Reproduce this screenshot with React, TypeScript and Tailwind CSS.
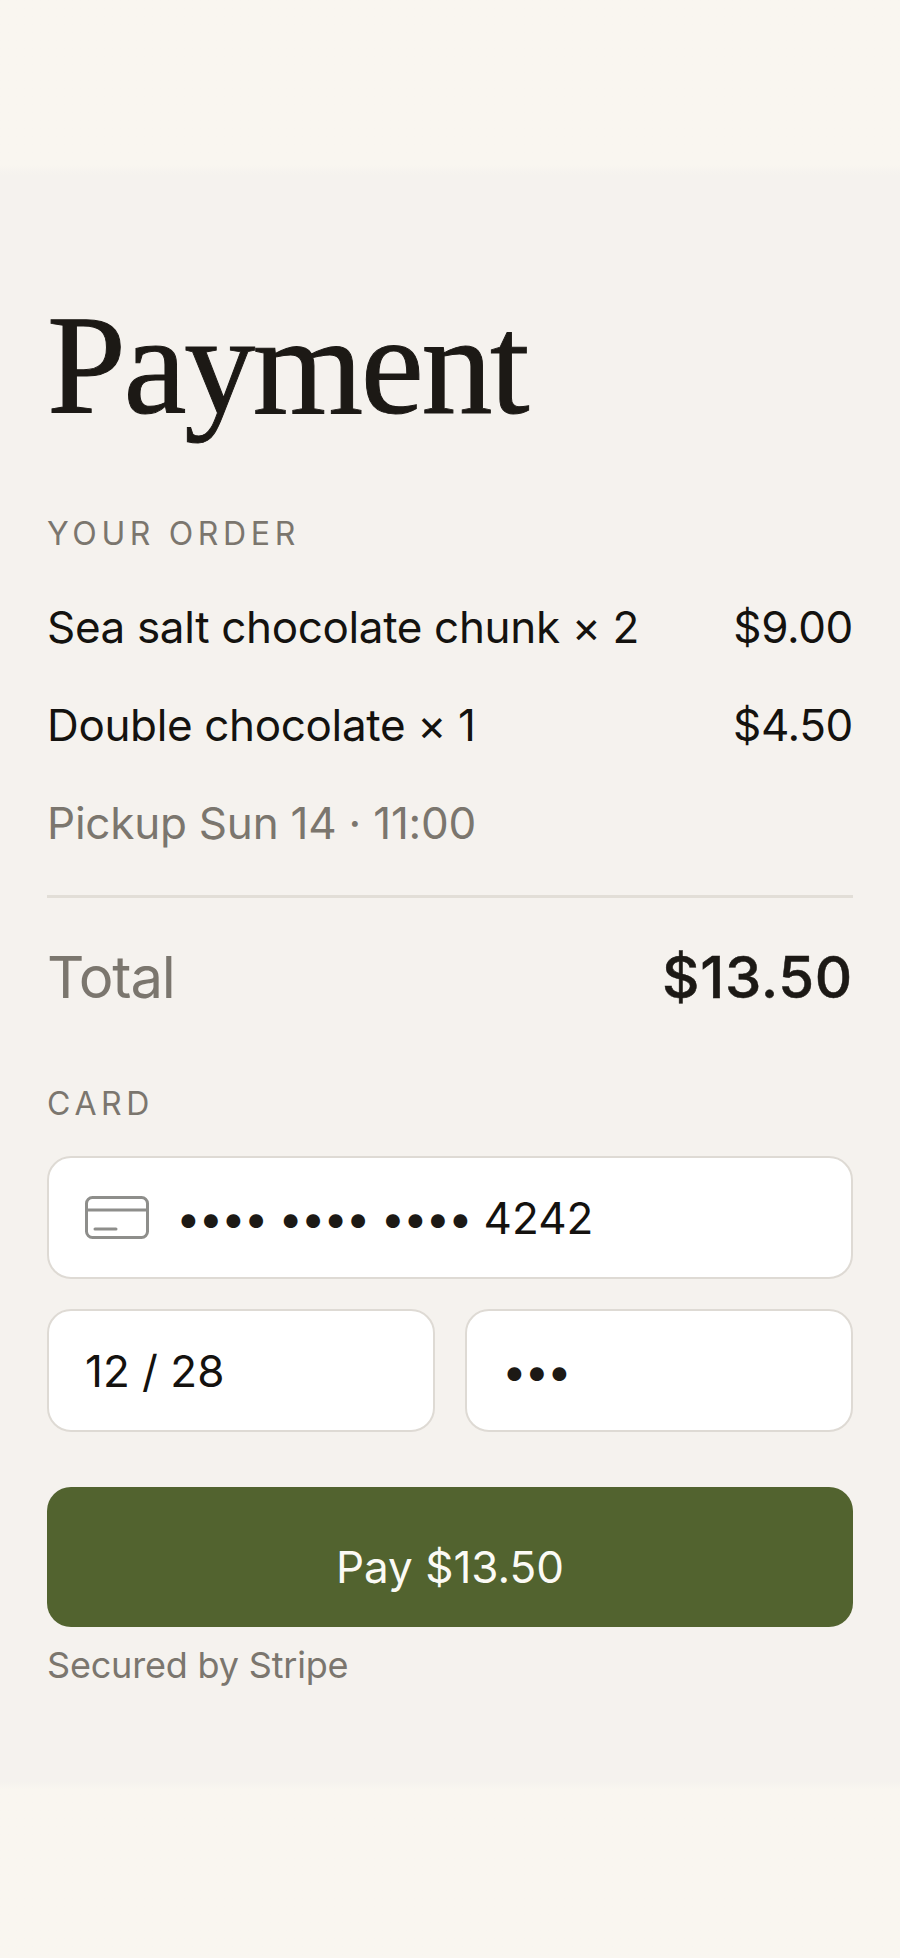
const sans = "font-['Inter','Liberation_Sans',sans-serif]";

const orderItems = [
  { name: "Sea salt chocolate chunk × 2", price: "$9.00" },
  { name: "Double chocolate × 1", price: "$4.50" },
];

function SectionLabel({ children, className }: { children: string; className: string }) {
  return <div className={`text-[32px] leading-[40px] tracking-[0.145em] text-[#7b766e] ${className}`}>{children}</div>;
}

function CardIcon() {
  return (
    <svg width="64" height="43" viewBox="0 0 64 43" fill="none" stroke="#8e8e8b" strokeWidth="3" className="shrink-0">
      <rect x="1.5" y="1.5" width="61" height="40" rx="6" />
      <path d="M1.5 14h61" />
      <path d="M10 33h21" strokeLinecap="round" />
    </svg>
  );
}

// masked digits sit a little tighter than the font's own bullets
function Dots({ children }: { children: string }) {
  return <span className="leading-none tracking-[-2.2px] text-[#1c1915]">{children}</span>;
}

export default function App() {
  return (
    <div className={`${sans} flex min-h-[1958px] w-[900px] flex-col bg-[#f9f6f0]`}>
      <div className="h-[175px] bg-gradient-to-b from-[#f9f6f0] from-[94%] to-[#f5f2ee]" />

      <main className="flex h-[1607px] flex-col bg-[#f5f2ee] px-[47px] pt-[119px]">
        <h1 className="mb-[78px] font-['Liberation_Serif',serif] text-[142px] leading-none tracking-[-0.017em] text-[#1c1915] [-webkit-text-stroke:1px_#1c1915]">
          Payment
        </h1>

        <SectionLabel className="mb-[43px]">YOUR ORDER</SectionLabel>

        <div className="flex flex-col gap-[38px] text-[44px] leading-[60px] tracking-[-0.008em] text-[#14120f]">
          {orderItems.map((item) => (
            <div key={item.name} className="flex justify-between">
              <span>{item.name}</span>
              <span>{item.price}</span>
            </div>
          ))}
          <div className="tracking-[-0.005em] text-[#7b766e]">Pickup Sun 14 · 11:00</div>
        </div>

        <div className="mt-[42px] h-[3px] bg-[#e2ded7]" />

        <div className="mt-[44px] flex justify-between text-[58px] leading-[70px]">
          <span className="tracking-[-0.02em] text-[#7b766e]">Total</span>
          <span className="font-medium tracking-[0.012em] text-[#1c1915] [-webkit-text-stroke:0.5px_#1c1915]">$13.50</span>
        </div>

        <SectionLabel className="mt-[72px]">CARD</SectionLabel>

        <div className="mt-[32px] flex h-[123px] items-center rounded-[24px] border-2 border-[#dedad4] bg-white pl-[36px] text-[44px] text-[#14120f]">
          <CardIcon />
          <div className="ml-[27px] flex items-center gap-[12px]">
            <Dots>••••</Dots>
            <Dots>••••</Dots>
            <Dots>••••</Dots>
            <span className="ml-[1px]">4242</span>
          </div>
        </div>

        <div className="mt-[30px] grid grid-cols-2 gap-[30px] text-[44px] text-[#14120f]">
          <div className="flex h-[123px] items-center rounded-[24px] border-2 border-[#dedad4] bg-white pl-[36px]">12 / 28</div>
          <div className="flex h-[123px] items-center rounded-[24px] border-2 border-[#dedad4] bg-white pl-[35px]">
            <Dots>•••</Dots>
          </div>
        </div>

        <button className="mt-[55px] h-[140px] rounded-[24px] bg-[#52632f] pt-5 text-center text-[44px] text-[#fbfaf5]">
          Pay $13.50
        </button>

        <div className="mt-[16px] text-[36px] leading-[44px] tracking-[-0.005em] text-[#7b766e]">Secured by Stripe</div>
      </main>

      <div className="flex-1 bg-gradient-to-b from-[#f5f2ee] to-[#f9f6f0] to-[4%]" />
    </div>
  );
}
